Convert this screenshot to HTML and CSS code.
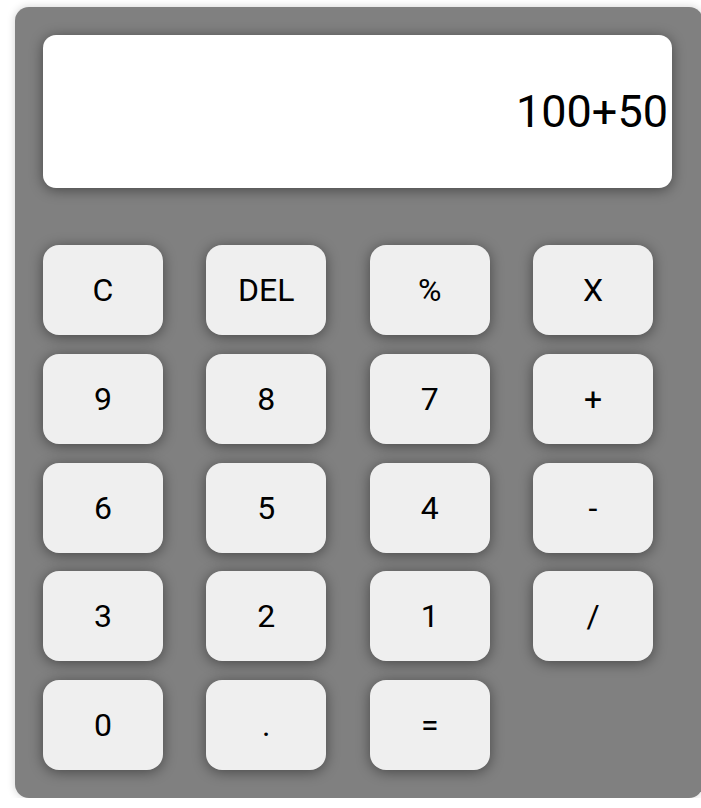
FILE: index.html
```html
<!DOCTYPE html>
<html>
<head>
<meta charset="utf-8">
<link rel="stylesheet" href="styles.css">
</head>
<body>
<div class="calc">
  <div class="display">100+50</div>
  <div class="keys">
    <button class="key">C</button>
    <button class="key">DEL</button>
    <button class="key">%</button>
    <button class="key">X</button>
    <button class="key">9</button>
    <button class="key">8</button>
    <button class="key">7</button>
    <button class="key">+</button>
    <button class="key">6</button>
    <button class="key">5</button>
    <button class="key">4</button>
    <button class="key">-</button>
    <button class="key">3</button>
    <button class="key">2</button>
    <button class="key">1</button>
    <button class="key">/</button>
    <button class="key">0</button>
    <button class="key">.</button>
    <button class="key">=</button>
  </div>
</div>
</body>
</html>
```
FILE: styles.css
```css
html, body {
  margin: 0;
  padding: 0;
  background: #ffffff;
}
body {
  font-family: Roboto, "Liberation Sans", sans-serif;
  overflow: hidden;
}
.calc {
  box-sizing: border-box;
  margin: 7px 0 0 15px;
  width: 688px;
  height: 791px;
  padding: 28px 28px 27px 28px;
  background: #808080;
  border-radius: 14px;
  box-shadow: 0 0 8px rgba(0, 0, 0, 0.18);
}
.display {
  box-sizing: border-box;
  width: 629px;
  height: 153px;
  background: #ffffff;
  border-radius: 13px;
  box-shadow: 0 2px 14px rgba(0, 0, 0, 0.45);
  display: flex;
  align-items: center;
  justify-content: flex-end;
  padding-right: 4px;
  font-size: 45px;
  color: #000;
  margin-bottom: 57px;
}
.keys {
  display: grid;
  grid-template-columns: repeat(4, 120px);
  grid-auto-rows: 90px;
  column-gap: 43.33px;
  row-gap: 18.75px;
}
.key {
  border: none;
  margin: 0;
  padding: 0;
  background: #efefef;
  border-radius: 16px;
  box-shadow: 0 2px 14px rgba(0, 0, 0, 0.45);
  font-family: Roboto, "Liberation Sans", sans-serif;
  font-size: 32px;
  color: #000;
  display: flex;
  align-items: center;
  justify-content: center;
}
```
